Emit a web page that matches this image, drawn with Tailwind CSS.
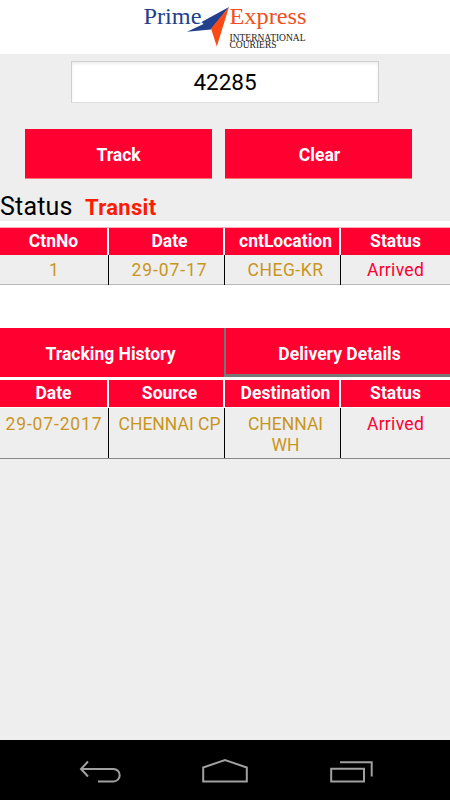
<!DOCTYPE html>
<html lang="en">
  <head>
    <meta charset="UTF-8" />
    <meta name="viewport" content="width=device-width, initial-scale=1.0" />
    <title>Prime Express - Tracking</title>
    <script src="https://cdn.jsdelivr.net/npm/@tailwindcss/browser@4"></script>
  </head>
  <body class="bg-[#eeeeee] font-['Roboto',sans-serif]">
    <div class="flex flex-col w-[450px] h-[800px] overflow-hidden">
      <!-- Logo -->
      <header class="h-[54px] shrink-0 bg-white">
        <svg class="block mx-auto" width="190" height="54" viewBox="130 0 190 54" font-family="Liberation Serif, serif">
          <text x="143.500" y="24" font-size="24" fill="#23408f" textLength="58" lengthAdjust="spacingAndGlyphs">Prime</text>
          <text x="229.500" y="24" font-size="24" fill="#f04e23" textLength="77" lengthAdjust="spacingAndGlyphs">Express</text>
          <path d="M229 7L201.500 22L203.500 24L187 31.800L211 29.500Z" fill="#23408f" />
          <path d="M229 7L211 28.500L216.800 46.500Z" fill="#fb4a14" />
          <text x="229.500" y="40.500" font-size="10" fill="#222222" textLength="76" lengthAdjust="spacingAndGlyphs">INTERNATIONAL</text>
          <text x="229.500" y="48" font-size="10" fill="#222222" textLength="47" lengthAdjust="spacingAndGlyphs">COURIERS</text>
        </svg>
      </header>

      <!-- Tracking form -->
      <main class="flex flex-col flex-1">
        <input type="text" value="42285" class="mt-[7px] ml-[71px] w-[308px] h-[42px] bg-white border border-[#cfcfcf] border-b-[#dddddd] shadow-[inset_0_2px_3px_#eeeeee] text-center text-[22.5px] text-black outline-none" />
        <div class="flex gap-[13px] mt-[26px] ml-[25px] h-[50px]">
          <button class="w-[187px] bg-[#ff0030] border-b border-[#ff7070] text-white font-bold text-[17.5px] pt-[3px]">Track</button>
          <button class="w-[187px] bg-[#ff0030] border-b border-[#ff7070] text-white font-bold text-[17.5px] pt-[3px] pl-[2px]">Clear</button>
        </div>
        <div class="flex h-[42px] pt-[14px] items-center">
          <span class="w-[85px] text-[25px] text-black tracking-[0.2px]">Status</span>
          <span class="text-[22px] font-bold text-[#ff1a00] tracking-[0.3px]">Transit</span>
        </div>

        <!-- Container status -->
        <section class="bg-white h-[107px] pt-[6px]">
          <div class="grid grid-cols-[109px_116px_116px_109px] h-7 border-t border-[#ffb0b8] text-center text-white font-bold text-[17.5px] leading-[26px] *:bg-[#ff0030]">
            <div class="border-r-2 border-white">CtnNo</div>
            <div class="border-r-2 border-white pl-[7px]">Date</div>
            <div class="border-r-2 border-white pl-[7px]">cntLocation</div>
            <div>Status</div>
          </div>
          <div class="grid grid-cols-[109px_116px_116px_109px] h-[30px] bg-[#eeeeee] border-b border-[#b8b8b8] text-center text-[#c8961e] text-[17.5px] leading-[30px] tracking-[0.3px]">
            <div class="border-r border-black">1</div>
            <div class="border-r border-black pl-[6px] tracking-[0.9px]">29-07-17</div>
            <div class="border-r border-black pl-[6px] tracking-[0.5px]">CHEG-KR</div>
            <div class="text-[#ff0030]">Arrived</div>
          </div>
        </section>

        <!-- Tabs -->
        <div class="flex h-[49px] bg-[#ff0030] text-white font-bold text-[17.5px]">
          <button class="w-[224px] pt-[3px] pr-[3px]">Tracking History</button>
          <button class="flex-1 pt-[6px] pl-[3px] border-l-2 border-l-[#70777a] border-b-3 border-b-[#777777] shadow-[0_1px_0_#6b0015]">Delivery Details</button>
        </div>

        <!-- Delivery history -->
        <section class="bg-white pt-[3px]">
          <div class="grid grid-cols-[109px_116px_116px_109px] h-[27px] text-center text-white font-bold text-[17.5px] leading-[26px] *:bg-[#ff0030]">
            <div class="border-r-2 border-white">Date</div>
            <div class="border-r-2 border-white pl-[7px]">Source</div>
            <div class="border-r-2 border-white pl-[7px]">Destination</div>
            <div>Status</div>
          </div>
          <div class="grid grid-cols-[109px_116px_116px_109px] h-[51px] mt-px bg-[#eeeeee] border-b border-[#888888] text-center text-[#c8961e] text-[17.5px] leading-[20.500px] *:pt-[6px]">
            <div class="border-r border-black tracking-[0.85px]">29-07-2017</div>
            <div class="border-r border-black pl-[6px] whitespace-nowrap">CHENNAI CP</div>
            <div class="border-r border-black pl-[6px]">CHENNAI<br />WH</div>
            <div class="text-[#ff0030] tracking-[0.3px]">Arrived</div>
          </div>
        </section>
      </main>

      <!-- Android navigation bar -->
      <nav class="h-[60px] shrink-0 bg-black">
        <svg width="450" height="60" viewBox="0 740 450 60" fill="none" stroke="#a0a0a0" stroke-width="2">
          <path d="M81 769H113.500A6.200 6.200 0 0 1 113.500 781.400H98M88 761.500L81 769L88 776.500" />
          <path d="M203.200 781.500V767.500L225 760L246.800 767.500V781.500Z" />
          <path d="M331.200 768.700H364V781.500H331.200ZM340 762.300H371.700V776.500" />
        </svg>
      </nav>
    </div>
  </body>
</html>
